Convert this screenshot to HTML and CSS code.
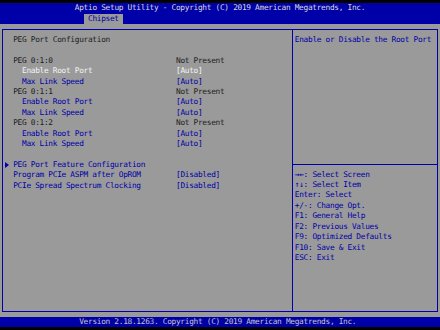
FILE: index.html
```html
<!DOCTYPE html>
<html lang="en">
<head>
    <meta charset="UTF-8">
    <title>Aptio Setup Utility - Chipset</title>
    <link rel="stylesheet" href="styles.css">
</head>
<body>
    <div class="screen">
        <!-- Title bar and tabs -->
        <header class="topbar">
            <div class="title">Aptio Setup Utility - Copyright (C) 2019 American Megatrends, Inc.</div>
            <div class="tabs">
                <span class="tab">Chipset</span>
            </div>
        </header>

        <main class="main">
            <div class="frame">
                <!-- Settings list -->
                <section class="settings">
                    <div class="row"><span class="label text-dark">PEG Port Configuration</span></div>
                    <div class="row"></div>

                    <div class="row"><span class="label text-dark">PEG 0:1:0</span><span class="value text-dark">Not Present</span></div>
                    <div class="row"><span class="label indent selected">Enable Root Port</span><span class="value selected">[Auto]</span></div>
                    <div class="row"><span class="label indent">Max Link Speed</span><span class="value">[Auto]</span></div>
                    <div class="row"><span class="label text-dark">PEG 0:1:1</span><span class="value text-dark">Not Present</span></div>
                    <div class="row"><span class="label indent">Enable Root Port</span><span class="value">[Auto]</span></div>
                    <div class="row"><span class="label indent">Max Link Speed</span><span class="value">[Auto]</span></div>
                    <div class="row"><span class="label text-dark">PEG 0:1:2</span><span class="value text-dark">Not Present</span></div>
                    <div class="row"><span class="label indent">Enable Root Port</span><span class="value">[Auto]</span></div>
                    <div class="row"><span class="label indent">Max Link Speed</span><span class="value">[Auto]</span></div>
                    <div class="row"></div>

                    <div class="row submenu">
                        <svg class="arrow" width="4" height="6" viewBox="0 0 4 6"><polygon points="0,0 4,3 0,6" fill="#0000a8"/></svg>
                        <span class="label">PEG Port Feature Configuration</span>
                    </div>
                    <div class="row"><span class="label">Program PCIe ASPM after OpROM</span><span class="value">[Disabled]</span></div>
                    <div class="row"><span class="label">PCIe Spread Spectrum Clocking</span><span class="value">[Disabled]</span></div>
                </section>

                <!-- Help panel -->
                <aside class="help">
                    <div class="help-text">
                        <div class="row">Enable or Disable the Root Port</div>
                    </div>
                    <ul class="keys">
                        <li class="row">&rarr;&larr;: Select Screen</li>
                        <li class="row">&uarr;&darr;: Select Item</li>
                        <li class="row">Enter: Select</li>
                        <li class="row">+/-: Change Opt.</li>
                        <li class="row">F1: General Help</li>
                        <li class="row">F2: Previous Values</li>
                        <li class="row">F9: Optimized Defaults</li>
                        <li class="row">F10: Save &amp; Exit</li>
                        <li class="row">ESC: Exit</li>
                    </ul>
                </aside>
            </div>
        </main>

        <footer class="footer">Version 2.18.1263. Copyright (C) 2019 American Megatrends, Inc.</footer>
    </div>
</body>
</html>
```

FILE: styles.css
```css
* {
    margin: 0;
    padding: 0;
    box-sizing: border-box;
}

:root {
    --bios-blue: #0000a8;
    --bios-gray: #9a9a9a;
    --bios-dark: #1c1c1c;
    --bios-light: #d8d8d8;
    --row: 10.45px;
}

body {
    background: #000;
    font-family: "DejaVu Sans Mono", monospace;
    font-size: 7.8px;
    letter-spacing: -0.296px;
    line-height: var(--row);
    color: var(--bios-blue);
}

.screen {
    width: 440px;
    padding-top: 3.45px;
}

.row {
    display: flex;
    height: var(--row);
    white-space: pre;
}

/* Header */
.topbar {
    background: var(--bios-blue);
    color: var(--bios-light);
}

.title {
    height: var(--row);
    padding-left: 74.8px;
    white-space: pre;
}

.tabs {
    height: var(--row);
    padding-left: 83.6px;
}

.tab {
    display: inline-block;
    width: 39.6px;
    height: var(--row);
    padding-left: 4.4px;
    background: var(--bios-gray);
    color: var(--bios-blue);
}

/* Main frame */
.main {
    background: var(--bios-gray);
    height: 292.6px;
    padding: 4.7px 2px 4.78px;
}

.frame {
    display: flex;
    height: 283.12px;
    border: 1px solid var(--bios-blue);
}

.settings {
    width: 290px;
    border-right: 1px solid var(--bios-blue);
    padding: 4.75px 0 0 10.2px;
}

.label {
    width: 162.8px;
}

.indent {
    padding-left: 8.8px;
}

.text-dark {
    color: var(--bios-dark);
}

.selected {
    color: #f4f4f4;
}

.submenu {
    position: relative;
}

.submenu .arrow {
    position: absolute;
    left: -8.6px;
    top: 2px;
}

.help {
    flex: 1;
}

.help-text {
    height: 134.95px;
    padding: 4.75px 0 0 1.8px;
    border-bottom: 1px solid var(--bios-blue);
}

.keys {
    list-style: none;
    padding: 4.65px 0 0 1.8px;
}

/* Footer */
.footer {
    background: var(--bios-blue);
    color: #c4c4c4;
    height: var(--row);
    padding-left: 79.2px;
    white-space: pre;
}
```
